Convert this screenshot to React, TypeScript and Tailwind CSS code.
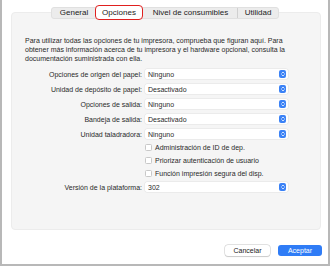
import { ChevronsUpDown } from "lucide-react";

const SELECTS: [string, string][] = [
  ["Opciones de origen del papel:", "Ninguno"],
  ["Unidad de depósito de papel:", "Desactivado"],
  ["Opciones de salida:", "Ninguno"],
  ["Bandeja de salida:", "Desactivado"],
  ["Unidad taladradora:", "Ninguno"],
];

const CHECKS = [
  "Administración de ID de dep.",
  "Priorizar autenticación de usuario",
  "Función impresión segura del disp.",
];

function Stepper() {
  return (
    <span className="w-[7px] h-[8px] rounded-[2px] bg-[#3b82f6] flex items-center justify-center">
      <ChevronsUpDown className="w-[6px] h-[6px] text-white" strokeWidth={3} />
    </span>
  );
}

function Select({ value }: { value: string }) {
  return (
    <div className="w-[143px] h-[10px] bg-white rounded-[2px] shadow-[0_0_0_0.5px_#e2e2e2] flex items-center pl-[3px] pr-[2px]">
      <span className="flex-1 text-[7px] leading-none text-[#2a2a2a]">{value}</span>
      <Stepper />
    </div>
  );
}

function Label({ text }: { text: string }) {
  return <div className="w-[119px] text-right text-[7px] leading-none text-[#2a2a2a]">{text}</div>;
}

export default function App() {
  const tabs = ["General", "Opciones", "Nivel de consumibles", "Utilidad"];
  return (
    <div
      className="relative w-[330px] h-[266px] bg-white border-x-2 border-b-2 border-[#b8b8b8] overflow-hidden"
      style={{ fontFamily: '"Liberation Sans", Arial, sans-serif' }}
    >
      {/* Panel */}
      <div className="ml-[9px] mt-[12px] w-[310px] h-[218px] rounded-[4px] bg-[#f5f5f5] border border-[#ececec] pl-[13px] pt-[23px]">
        <p className="w-[280px] text-[7px] leading-[9px] text-[#2a2a2a]">
          Para utilizar todas las opciones de tu impresora, comprueba que figuran aquí. Para obtener más información acerca de tu impresora y el hardware opcional, consulta la documentación suministrada con ella.
        </p>

        <div className="mt-[6px] flex flex-col gap-[5px]">
          {SELECTS.map(([l, v]) => (
            <div key={l} className="flex items-center gap-[3px] -ml-[2px]">
              <Label text={l} />
              <Select value={v} />
            </div>
          ))}
        </div>

        <div className="mt-[5px] ml-[120px] flex flex-col gap-[6px]">
          {CHECKS.map((c) => (
            <div key={c} className="flex items-center gap-[3px]">
              <span className="w-[7px] h-[7px] bg-white rounded-[1.5px] border border-[#c8c8c8]" />
              <span className="text-[7px] leading-none text-[#2a2a2a]">{c}</span>
            </div>
          ))}
        </div>

        <div className="mt-[5px] flex items-center gap-[3px] -ml-[2px]">
          <Label text="Versión de la plataforma:" />
          <Select value="302" />
        </div>
      </div>

      {/* Tabs */}
      <div className="absolute left-[49px] top-[7px] h-[12px] w-[228px] flex items-center bg-[#ececec] rounded-[3px] border border-[#e0e0e0]">
        {tabs.map((t, i) => (
          <div
            key={t}
            className={`h-full flex items-center justify-center text-[8px] leading-none text-[#222] ${
              i === 0 ? "w-[44px]" : i === 1 ? "w-[48px]" : i === 2 ? "w-[94px] border-r border-[#d0d0d0] h-[7px]" : "flex-1"
            }`}
          >
            {t}
          </div>
        ))}
        <div className="absolute left-[43px] top-[-3px] w-[48px] h-[15px] rounded-[4px] border-[1.5px] border-[#e0201f] bg-white flex items-center justify-center text-[8px] leading-none text-[#222]">
          Opciones
        </div>
      </div>

      {/* Buttons */}
      <div className="mt-[15px] mr-[6px] flex justify-end gap-[8px]">
        <button className="w-[45px] h-[11px] rounded-[3px] bg-white shadow-[0_0_0_0.5px_#c8c8c8,0_0.5px_1px_#d0d0d0] text-[7px] leading-none text-[#222]">
          Cancelar
        </button>
        <button className="w-[44px] h-[11px] rounded-[3px] bg-[#2f7cf6] text-[7px] leading-none text-white">
          Aceptar
        </button>
      </div>
    </div>
  );
}
